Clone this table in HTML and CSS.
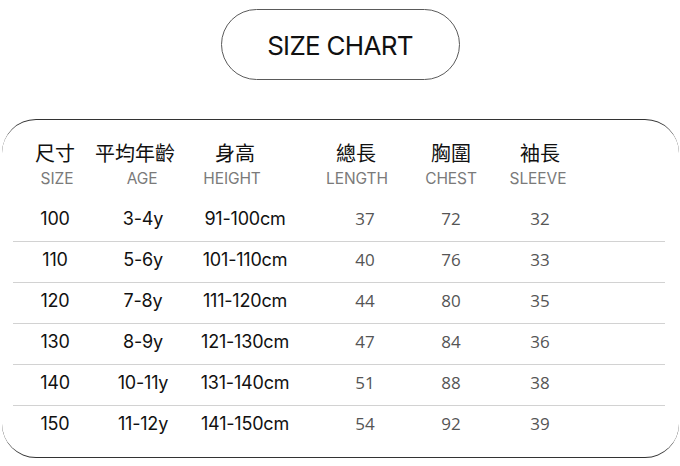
FILE: index.html
```html
<!DOCTYPE html>
<html lang="zh-Hant">
<head>
<meta charset="utf-8">
<title>Size Chart</title>
<link rel="stylesheet" href="styles.css">
</head>
<body>
<div class="page">
  <div class="title-wrap">
    <div class="pill">SIZE CHART</div>
  </div>
  <div class="card">
    <div class="grid head">
      <div class="hc c1"><span class="zh">尺寸</span><span class="en o1">SIZE</span></div>
      <div class="hc c2"><span class="zh">平均年齡</span><span class="en o2">AGE</span></div>
      <div class="hc c3"><span class="zh">身高</span><span class="en o3">HEIGHT</span></div>
      <div class="hc c4"><span class="zh">總長</span><span class="en o4">LENGTH</span></div>
      <div class="hc c5"><span class="zh">胸圍</span><span class="en">CHEST</span></div>
      <div class="hc c6"><span class="zh">袖長</span><span class="en o6">SLEEVE</span></div>
      <div></div>
    </div>
    <div class="grid row first"><div class="v a">100</div><div class="v a v2">3-4y</div><div class="v a v3">91-100cm</div><div class="v b v4">37</div><div class="v b">72</div><div class="v b">32</div><div></div></div>
    <div class="grid row"><div class="v a">110</div><div class="v a v2">5-6y</div><div class="v a v3">101-110cm</div><div class="v b v4">40</div><div class="v b">76</div><div class="v b">33</div><div></div></div>
    <div class="grid row"><div class="v a">120</div><div class="v a v2">7-8y</div><div class="v a v3">111-120cm</div><div class="v b v4">44</div><div class="v b">80</div><div class="v b">35</div><div></div></div>
    <div class="grid row"><div class="v a">130</div><div class="v a v2">8-9y</div><div class="v a v3">121-130cm</div><div class="v b v4">47</div><div class="v b">84</div><div class="v b">36</div><div></div></div>
    <div class="grid row"><div class="v a">140</div><div class="v a v2">10-11y</div><div class="v a v3">131-140cm</div><div class="v b v4">51</div><div class="v b">88</div><div class="v b">38</div><div></div></div>
    <div class="grid row"><div class="v a">150</div><div class="v a v2">11-12y</div><div class="v a v3">141-150cm</div><div class="v b v4">54</div><div class="v b">92</div><div class="v b">39</div><div></div></div>
  </div>
</div>
</body>
</html>
```
FILE: styles.css
```css
* { box-sizing: border-box; }
html, body { margin: 0; padding: 0; background: #fff; }
body { width: 680px; height: 466px; overflow: hidden; font-family: Inter, "Noto Sans CJK TC", sans-serif; color: #111; }

.title-wrap { display: flex; justify-content: center; padding-top: 9px; }
.pill {
  width: 239px; height: 71px;
  border: 1px solid #5a5a5a; border-radius: 36px;
  display: flex; align-items: center; justify-content: center;
  font-family: Inter, sans-serif; font-size: 26px; letter-spacing: -0.7px;
  color: #111; padding-top: 1px; white-space: nowrap;
}

.card {
  margin: 39px 1px 0 2px;
  border-top: 1.5px solid #333;
  border-bottom: 1.5px solid #333;
  border-left: 0 solid #333;
  border-right: 0 solid #333;
  border-radius: 34px;
  padding: 0 0 11px 11px;
}

.grid {
  display: grid;
  width: 652px;
  grid-template-columns: 84px 76px 124px 118px 72px 106px 72px;
}

.head { height: 80px; padding-top: 20px; }
.hc { display: flex; flex-direction: column; align-items: center; white-space: nowrap; }
.zh {
  font-family: "Noto Sans CJK TC", sans-serif; font-size: 20px; line-height: 26px;
  font-weight: 400; color: #111; white-space: nowrap;
}
.en {
  margin-top: 3px; font-family: Inter, sans-serif; font-size: 15.5px; line-height: 20px;
  color: #7a7a7a; letter-spacing: -0.1px; white-space: nowrap;
}
.o1 { padding-left: 4px; }
.o2 { padding-left: 14px; }
.o3 { padding-right: 6px; }
.o4 { padding-left: 2px; }
.o6 { padding-right: 4px; }

.row { height: 41px; border-top: 1px solid #d2d2d2; padding-bottom: 6px; align-items: center; }
.row.first { border-top-color: transparent; }
.v { text-align: center; white-space: nowrap; }
.a { font-family: Inter, sans-serif; font-size: 18px; color: #111; letter-spacing: -0.2px; }
.b { font-family: "Open Sans", sans-serif; font-size: 17px; color: #555; }
.v2 { padding-left: 16px; }
.v3 { padding-left: 20px; }
.v4 { padding-left: 18px; }
```
